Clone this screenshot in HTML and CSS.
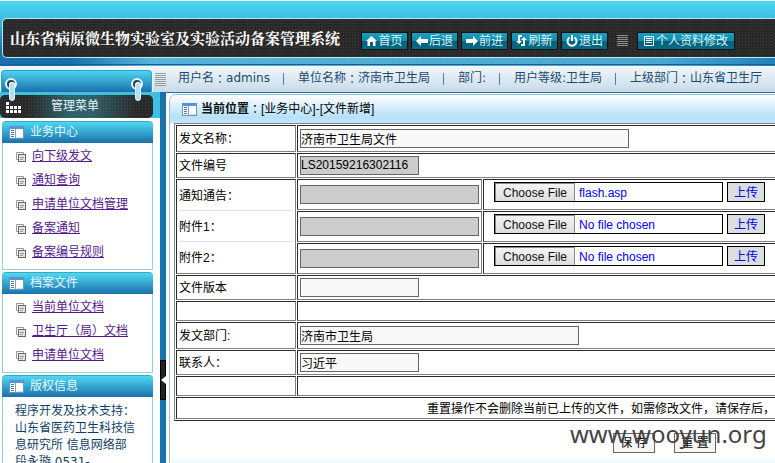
FILE: index.html
```html
<!DOCTYPE html>
<html lang="zh-CN">
<head>
<meta charset="utf-8">
<title>山东省病原微生物实验室及实验活动备案管理系统</title>
<link rel="stylesheet" href="styles.css">
</head>
<body>
<svg class="defs" aria-hidden="true">
  <symbol id="panel" viewBox="0 0 15 13">
    <rect x=".5" y=".5" width="14" height="12" fill="#fff" stroke="#6a94c4"/>
    <path d="M0 1.500h15" stroke="#5a93d8" stroke-width="3"/>
    <path d="M6.500 3v9" stroke="#7fa0c4"/>
    <path d="M2 4.500h3M2 6.500h3M2 8.500h3M2 10.500h3" stroke="#5577a0"/>
    <path d="M8 11.500h6" stroke="#cfe0f2"/>
  </symbol>
  <symbol id="pages" viewBox="0 0 10 10">
    <path d="M.5 7.500v-7h7v2" fill="none" stroke="#999"/>
    <path d="M.5 7.500h2" stroke="#999"/>
    <rect x="2.500" y="2.500" width="7" height="7" fill="#e4e4e4" stroke="#666"/>
    <path d="M4 5.500h4M4 7.500h3" stroke="#999"/>
  </symbol>
</svg>

<header class="top">
  <div class="banner">
    <h1>山东省病原微生物实验室及实验活动备案管理系统</h1>
    <nav class="tools">
      <a href="#"><svg width="11" height="10" viewBox="0 0 11 10"><path d="M5.500 0L11 5H9.500V10H7V6H4v4H1.500V5H0z" fill="#fff"/></svg>首页</a>
      <a href="#"><svg width="12" height="10" viewBox="0 0 12 10"><path d="M0 5l5-5v3h7v4H5v3z" fill="#fff"/></svg>后退</a>
      <a href="#"><svg width="12" height="10" viewBox="0 0 12 10"><path d="M12 5L7 0v3H0v4h7v3z" fill="#fff"/></svg>前进</a>
      <a href="#"><svg width="11" height="11" viewBox="0 0 11 11"><path d="M6 1H3V7M5 10h3V4" fill="none" stroke="#fff" stroke-width="2"/><path d="M0 6h6L3 9zM5 5h6L8 2z" fill="#fff"/></svg>刷新</a>
      <a href="#"><svg width="12" height="12" viewBox="0 0 12 12"><path d="M3.500 2.500a4.500 4.500 0 1 0 5 0M6 0v6" fill="none" stroke="#fff" stroke-width="2"/></svg>退出</a>
      <span class="grip"></span>
      <a class="wide" href="#"><svg width="10" height="10" viewBox="0 0 10 10"><path d="M.5.5h9v9h-9zM2 2.500h6M2 4.500h6M2 6.500h6" fill="none" stroke="#fff"/></svg>个人资料修改</a>
    </nav>
  </div>
</header>

<div class="page">
  <aside class="side">
    <div class="cap"></div>
    <svg class="rings" viewBox="0 0 153 30" aria-hidden="true">
      <g id="ring"><circle cx="11" cy="6" r="5" fill="#245" stroke="#e8f4fa" stroke-width="2"/><circle cx="12" cy="7" r="3" fill="#fff"/><rect x="9.500" y="4.500" width="5" height="18" rx="2.500" fill="#b4dcf8" stroke="#e6f5ff"/></g>
      <use href="#ring" x="126"/>
    </svg>
    <div class="menu-row">
      <div class="menu-title">
        <svg width="15" height="11" viewBox="0 0 15 11"><path d="M0 1.500h3" stroke="#fff" stroke-width="3"/><path d="M0 5.500h15M0 9.500h15" stroke="#fff" stroke-width="3" stroke-dasharray="3 1"/></svg>
        <span>管理菜单</span>
      </div>
    </div>
    <section class="box">
      <h2><svg width="15" height="13"><use href="#panel"/></svg>业务中心</h2>
      <ul>
        <li><svg width="10" height="10"><use href="#pages"/></svg><a href="#">向下级发文</a></li>
        <li><svg width="10" height="10"><use href="#pages"/></svg><a href="#">通知查询</a></li>
        <li><svg width="10" height="10"><use href="#pages"/></svg><a href="#">申请单位文档管理</a></li>
        <li><svg width="10" height="10"><use href="#pages"/></svg><a href="#">备案通知</a></li>
        <li><svg width="10" height="10"><use href="#pages"/></svg><a href="#">备案编号规则</a></li>
      </ul>
    </section>
    <section class="box">
      <h2><svg width="15" height="13"><use href="#panel"/></svg>档案文件</h2>
      <ul>
        <li><svg width="10" height="10"><use href="#pages"/></svg><a href="#">当前单位文档</a></li>
        <li><svg width="10" height="10"><use href="#pages"/></svg><a href="#">卫生厅（局）文档</a></li>
        <li><svg width="10" height="10"><use href="#pages"/></svg><a href="#">申请单位文档</a></li>
      </ul>
    </section>
    <section class="box">
      <h2><svg width="15" height="13"><use href="#panel"/></svg>版权信息</h2>
      <p>程序开发及技术支持<i>：</i><br>山东省医药卫生科技信<br>息研究所 信息网络部<br>段永璇 0531-</p>
    </section>
  </aside>

  <div class="right">
    <div class="info">
      <span class="grip"></span>
      <ul>
        <li>用户名<i>：</i>admins</li>
        <li>单位名称<i>：</i>济南市卫生局</li>
        <li>部门:</li>
        <li>用户等级:卫生局</li>
        <li>上级部门<i>：</i>山东省卫生厅</li>
      </ul>
    </div>
    <div class="work">
      <div class="divider">
        <button type="button" class="fold" aria-label="收起菜单"><svg width="5" height="8" viewBox="0 0 5 8"><path d="M5 0v8L0 4z" fill="#fff"/></svg></button>
      </div>
      <main class="panel">
        <div class="crumb"><svg width="15" height="13"><use href="#panel"/></svg><b>当前位置</b><i>：</i>[业务中心]-[文件新增]</div>
        <form>
          <table>
            <tr class="tall"><td class="name"><label for="title">发文名称<i>：</i></label></td><td colspan="2"><input type="text" id="title" class="w-xl" value="济南市卫生局文件"></td></tr>
            <tr class="mid"><td><label for="code">文件编号</label></td><td colspan="2"><input type="text" id="code" class="w-s" readonly value="LS20159216302116"></td></tr>
            <tr class="attach">
              <td rowspan="3" class="stack"><label for="n0">通知通告<i>：</i></label><label for="n1">附件1<i>：</i></label><label for="n2">附件2<i>：</i></label></td>
              <td class="path"><input type="text" id="n0" class="w-m" readonly></td>
              <td><div class="upload"><div class="pick chosen"><input type="file" aria-label="通知通告"><span>flash.asp</span></div><button type="button">上传</button></div></td>
            </tr>
            <tr class="attach">
              <td class="path"><input type="text" id="n1" class="w-m" readonly></td>
              <td><div class="upload"><div class="pick"><input type="file" aria-label="附件1"></div><button type="button">上传</button></div></td>
            </tr>
            <tr class="attach">
              <td class="path"><input type="text" id="n2" class="w-m" readonly></td>
              <td><div class="upload"><div class="pick"><input type="file" aria-label="附件2"></div><button type="button">上传</button></div></td>
            </tr>
            <tr class="mid"><td><label for="ver">文件版本</label></td><td colspan="2"><input type="text" id="ver" class="w-s"></td></tr>
            <tr class="empty"><td></td><td colspan="2"></td></tr>
            <tr class="tall"><td><label for="dept">发文部门:</label></td><td colspan="2"><input type="text" id="dept" class="w-l" value="济南市卫生局"></td></tr>
            <tr class="mid"><td><label for="person">联系人<i>：</i></label></td><td colspan="2"><input type="text" id="person" class="w-s" value="习近平"></td></tr>
            <tr class="empty"><td></td><td colspan="2"></td></tr>
            <tr class="note"><td colspan="3">重置操作不会删除当前已上传的文件，如需修改文件，请保存后，</td></tr>
          </table>
          <div class="actions">
            <button type="submit">保 存</button>
            <button type="reset">重 置</button>
            <span class="mark">www.wooyun.org</span>
          </div>
        </form>
      </main>
    </div>
  </div>
</div>
</body>
</html>
```
FILE: styles.css
```css
* { box-sizing: border-box; }

body {
  margin: 0;
  height: 100vh;
  overflow: hidden;
  display: flex;
  flex-direction: column;
  background: #fff;
  font: 12px/17px "DejaVu Sans", "Noto Sans CJK SC", sans-serif;
  text-spacing-trim: space-all;
  color: #000;
}

ul, h1, h2, p { margin: 0; padding: 0; list-style: none; }
svg { flex: none; }
.defs { display: none; }

/* full-width colon, centred in its square */
i { font-family: "Noto Sans CJK TC", sans-serif; font-style: normal; line-height: 1; }

/* header */
.top {
  padding: 18px 0 8px 2px;
  background:
    linear-gradient(#fff, #fff) 0 0 / 100% 1px no-repeat,
    linear-gradient(#175f8f, #175f8f) 0 64px / 100% 1px no-repeat,
    linear-gradient(90deg, #196fab 0, #196fab 70px, #55b3d9 150px, #4aa8d2 85%, #2482bb) 0 57px / 100% 9px no-repeat,
    linear-gradient(#4ddaf4, #3dbfdf 18px, #1a72ab 50px);
}
.banner {
  display: flex;
  align-items: center;
  height: 40px;
  padding-left: 7px;
  border: solid #b5eaf6;
  border-width: 1px 0 1px 1px;
  border-radius: 5px 0 0 5px;
  background:
    radial-gradient(#3d3d3d 1px, transparent 1px) 0 0 / 3px 3px,
    #292929;
}
.banner h1 {
  flex: none;
  width: 351px;
  font: bold 15px/24px "Noto Serif CJK SC", "Noto Sans CJK SC", serif;
  color: #fff;
  white-space: nowrap;
}
.tools { display: flex; align-items: center; gap: 3px; padding-top: 5px; }
.tools a {
  display: flex;
  align-items: center;
  justify-content: center;
  gap: 1px;
  width: 47px;
  height: 18px;
  border: 1px solid #111;
  background: linear-gradient(#17a0c2, #128bab 50%, #04607a 50%, #066a84);
  color: #d8f3f8;
  line-height: 16px;
  text-decoration: none;
  white-space: nowrap;
}
.tools .wide { width: 98px; gap: 2px; }
.grip {
  flex: none;
  width: 11px;
  height: 13px;
  background: repeating-linear-gradient(#9a9a9a 0 1px, transparent 1px 2px);
}
.tools .grip { margin: 0 6px; height: 11px; opacity: .9; }

.page { flex: 1; display: flex; min-height: 0; }

/* menu */
.side { position: relative; width: 153px; padding-top: 4px; flex: none; background: linear-gradient(#eef6fb 26px, #fff 26px); }
.cap {
  height: 22px;
  margin: 0 1px;
  border: solid #2fa3c4;
  border-width: 1px 1px 0;
  border-radius: 4px 4px 0 0;
  background: linear-gradient(#4dd4ee, #1a70ab);
}
.rings { position: absolute; top: 12px; left: 0; width: 153px; height: 30px; }
.menu-row { margin-right: -7px; padding: 3px 7px 0 0; background: #40c0e0; }
.menu-title {
  display: flex;
  align-items: center;
  gap: 30px;
  height: 23px;
  padding-left: 6px;
  border-radius: 5px;
  background:
    radial-gradient(#ffffff18 1px, transparent 1px) 0 0 / 3px 3px,
    linear-gradient(90deg, #292929 18%, #2f6068 45%, #2f6068 60%, #292929 90%);
  color: #e6f3f5;
}
.menu-title svg { margin-top: 2px; }
.box { margin: 2px 0 0 2px; }
.menu-row + .box { margin-top: 3px; }
.box h2 {
  display: flex;
  align-items: center;
  gap: 6px;
  height: 22px;
  padding-left: 7px;
  border-top: 1px solid #3aa8c4;
  border-radius: 4px 4px 0 0;
  background: linear-gradient(#4dd8f2, #1a70ab);
  color: #e8f7fb;
  font-size: 12px;
  font-weight: normal;
}
.box ul, .box p { border: 1px solid #8fd3e0; border-top: 0; }
.box ul { padding: 1px 0 5px 13px; }
.box li { display: flex; align-items: center; gap: 6px; height: 24px; }
.box li svg { margin-top: 2px; }
.box li a { color: #551a8b; }
.box p { padding: 6px 0 0 12px; height: 120px; color: #0f3f66; white-space: nowrap; }

/* right side */
.right { flex: 1; min-width: 0; display: flex; flex-direction: column; }
.info {
  display: flex;
  gap: 12px;
  height: 27px;
  padding: 4px 0 0 2px;
  border-bottom: 1px solid #1a72ab;
  background: linear-gradient(#f2f7fb, #c8dbe9);
  color: #184a72;
}
.info .grip { margin-top: 3px; }
.info ul { display: flex; white-space: nowrap; }
.info li { display: flex; align-items: center; height: 17px; }
.info li + li::before {
  content: "";
  width: 1px;
  height: 12px;
  margin: 0 14px 0 13px;
  background: #3a86bf;
}
.work { flex: 1; min-height: 0; display: flex; }
.divider {
  flex: none;
  width: 6px;
  margin-left: 7px;
  padding-top: 267px;
  background: #1a72ab;
}
.fold {
  display: flex;
  align-items: center;
  justify-content: center;
  width: 6px;
  height: 40px;
  padding: 0;
  border: 1px solid #000;
  background: #222;
}
.panel {
  flex: 1;
  min-width: 0;
  margin: 1px 0 0 3px;
  border: solid #a3bfd6;
  border-width: 1px 0 0 1px;
  border-radius: 7px 0 0 0;
  overflow: hidden;
  background: linear-gradient(#fff 362px, #e6f5fd 370px);
}
.crumb {
  display: flex;
  align-items: center;
  height: 28px;
  padding-left: 12px;
  background: linear-gradient(#fff, #b5e0fb 80%, #c8e8fc);
  font-family: "Liberation Sans", "Noto Sans CJK SC", sans-serif;
}
.crumb svg { margin-right: 4px; }
.crumb b { color: #111; }

/* form */
form { font-family: "Liberation Sans", "Noto Sans CJK SC", sans-serif; }
input, button { font: inherit; margin: 0; }
table {
  width: calc(100% + 8px);
  margin-left: 4px;
  border: 1px solid;
  border-color: #808080 #2b2b2b #2b2b2b #808080;
  border-collapse: separate;
  border-spacing: 1px;
}
td {
  padding: 0 2px;
  border: 1px solid;
  border-color: #2b2b2b #808080 #808080 #2b2b2b;
}
td label { display: block; padding-top: 2px; }
.name { width: 120px; }
.path { width: 185px; }
.tall td { height: 27px; }
.mid td { height: 25px; }
.empty td { height: 20px; }
.attach td { height: 31px; }
.note td { height: 22px; padding: 2px 0 0 250px; white-space: nowrap; }
.stack label { height: 31px; line-height: 29px; border-bottom: 1px solid #d5e3ef; }
.stack label:last-child { border: 0; }
input[type="text"] {
  display: block;
  height: 19px;
  padding: 0 0 1px;
  border: 1px solid #666;
  background: #f8f8f8;
}
input[readonly][type="text"] { background: #ccc; }
.w-xl { width: 329px; }
.w-l { width: 279px; }
.w-m { width: 179px; }
.w-s { width: 119px; }
.upload { display: flex; gap: 4px; padding: 0 0 6px 8px; }
.upload button {
  width: 38px;
  height: 20px;
  padding: 2px 0 0;
  border: 1px solid #000;
  background: #ddd;
  color: #00f;
  line-height: 16px;
}
.pick { position: relative; width: 229px; height: 20px; }
.pick input {
  display: block;
  width: 100%;
  height: 20px;
  border: 1px solid #000;
  color: #00f;
  line-height: 18px;
}
.pick input::file-selector-button {
  width: 80px;
  height: 20px;
  margin: 0 4px 0 0;
  padding: 0;
  border: 1px solid #888;
  background: linear-gradient(#f4f4f4, #dcdcdc);
  color: #111;
  font: inherit;
}
.chosen input { color: transparent; }
.pick span { position: absolute; left: 85px; top: 3px; color: #00f; pointer-events: none; }

.actions { position: relative; display: flex; gap: 19px; padding: 12px 0 0 443px; }
.actions button {
  width: 42px;
  height: 20px;
  padding: 0;
  border: 1px solid #666;
  background: #f5f5f5;
  line-height: 16px;
  white-space: nowrap;
}
.mark {
  position: absolute;
  left: 400px;
  top: 0;
  font: 24px/26px "Noto Sans", sans-serif;
  color: #444;
  pointer-events: none;
}
```
